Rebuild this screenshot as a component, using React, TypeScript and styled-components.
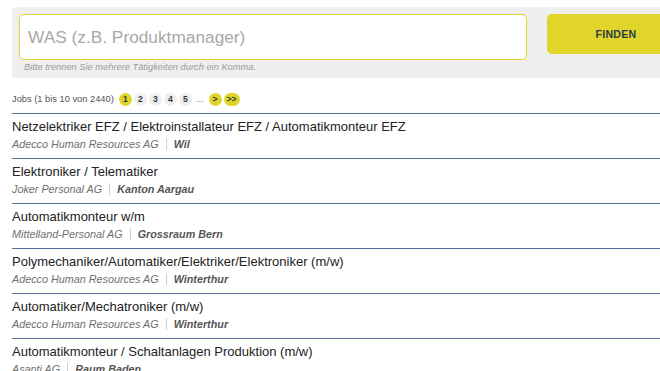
import * as React from "react";
import styled, { createGlobalStyle } from "styled-components";

const GlobalStyle = createGlobalStyle`
  html, body {
    margin: 0;
    padding: 0;
    background: #ffffff;
    overflow: hidden;
  }
  body {
    font-family: "Liberation Sans", Arial, sans-serif;
  }
`;

const Page = styled.div`
  display: flex;
  flex-direction: column;
  padding: 7px 0 0 12px;
  width: 700px;
`;

const SearchPanel = styled.div`
  display: flex;
  flex-direction: column;
  background-color: #efefef;
  border-radius: 4px 0 0 4px;
  padding: 7px 0 0 7px;
  height: 71px;
  box-sizing: border-box;
`;

const SearchRow = styled.div`
  display: flex;
  align-items: flex-start;
  gap: 20px;
`;

const SearchInput = styled.input`
  width: 508px;
  height: 46px;
  box-sizing: border-box;
  border: 1px solid #e1d52b;
  border-radius: 5px;
  background: #ffffff;
  padding: 0 8px;
  font-family: "Liberation Sans", Arial, sans-serif;
  font-size: 17.3px;
  color: #333;
  outline: none;

  &::placeholder {
    color: #a8a8a8;
  }
`;

const FindButton = styled.button`
  width: 138px;
  height: 40px;
  border: none;
  border-radius: 5px;
  background-color: #e1d52b;
  color: #2b3a45;
  font-family: "Liberation Sans", Arial, sans-serif;
  font-weight: bold;
  font-size: 10.5px;
  letter-spacing: 0.3px;
  cursor: pointer;
`;

const Hint = styled.div`
  font-size: 9.3px;
  font-style: italic;
  color: #9a9a9a;
  margin: 2px 0 0 5px;
`;

const Pager = styled.div`
  display: flex;
  align-items: center;
  height: 14px;
  margin-top: 14px;
  font-size: 9.3px;
  color: #555;
`;

const PagerLabel = styled.span`
  margin-right: 5px;
`;

const PageDot = styled.span<{ $active?: boolean; $wide?: boolean }>`
  display: inline-flex;
  align-items: center;
  justify-content: center;
  min-width: 13px;
  height: 13px;
  padding: 0 ${(p) => (p.$wide ? "3px" : "0")};
  box-sizing: border-box;
  margin-right: 2px;
  border-radius: 7px;
  background-color: ${(p) => (p.$active ? "#e1d52b" : "#eeeeee")};
  color: #2b3a45;
  font-weight: bold;
  font-size: 8.5px;
`;

const Ellipsis = styled.span`
  margin: 0 5px 0 2px;
  color: #777;
`;

const JobList = styled.div`
  display: flex;
  flex-direction: column;
  margin-top: 7px;
  border-top: 1px solid #5a6c9b;
`;

const JobRow = styled.div`
  display: flex;
  flex-direction: column;
  height: 45px;
  box-sizing: border-box;
  padding-top: 5px;
  border-bottom: 1px solid #5a6c9b;
`;

const JobTitle = styled.div`
  font-size: 13px;
  line-height: 16px;
  color: #222;
`;

const JobMeta = styled.div`
  display: flex;
  align-items: center;
  margin-top: 2px;
  font-size: 10.8px;
  line-height: 14px;
  font-style: italic;
`;

const Company = styled.span`
  color: #6f6f6f;
`;

const Divider = styled.span`
  width: 1px;
  height: 12px;
  background-color: #cfcfcf;
  margin: 0 7px;
`;

const Location = styled.span`
  color: #555;
  font-weight: bold;
`;

const jobs = [
  {
    title: "Netzelektriker EFZ / Elektroinstallateur EFZ / Automatikmonteur EFZ",
    company: "Adecco Human Resources AG",
    location: "Wil",
  },
  { title: "Elektroniker / Telematiker", company: "Joker Personal AG", location: "Kanton Aargau" },
  { title: "Automatikmonteur w/m", company: "Mittelland-Personal AG", location: "Grossraum Bern" },
  {
    title: "Polymechaniker/Automatiker/Elektriker/Elektroniker (m/w)",
    company: "Adecco Human Resources AG",
    location: "Winterthur",
  },
  { title: "Automatiker/Mechatroniker (m/w)", company: "Adecco Human Resources AG", location: "Winterthur" },
  {
    title: "Automatikmonteur / Schaltanlagen Produktion (m/w)",
    company: "Asanti AG",
    location: "Raum Baden",
  },
];

export default function App() {
  return (
    <Page>
      <GlobalStyle />
      <SearchPanel>
        <SearchRow>
          <SearchInput placeholder="WAS (z.B. Produktmanager)" />
          <FindButton>FINDEN</FindButton>
        </SearchRow>
        <Hint>Bitte trennen Sie mehrere Tätigkeiten durch ein Komma.</Hint>
      </SearchPanel>

      <Pager>
        <PagerLabel>Jobs (1 bis 10 von 2440)</PagerLabel>
        <PageDot $active>1</PageDot>
        <PageDot>2</PageDot>
        <PageDot>3</PageDot>
        <PageDot>4</PageDot>
        <PageDot>5</PageDot>
        <Ellipsis>...</Ellipsis>
        <PageDot $active>&gt;</PageDot>
        <PageDot $active $wide>&gt;&gt;</PageDot>
      </Pager>

      <JobList>
        {jobs.map((job) => (
          <JobRow key={job.title}>
            <JobTitle>{job.title}</JobTitle>
            <JobMeta>
              <Company>{job.company}</Company>
              <Divider />
              <Location>{job.location}</Location>
            </JobMeta>
          </JobRow>
        ))}
      </JobList>
    </Page>
  );
}
